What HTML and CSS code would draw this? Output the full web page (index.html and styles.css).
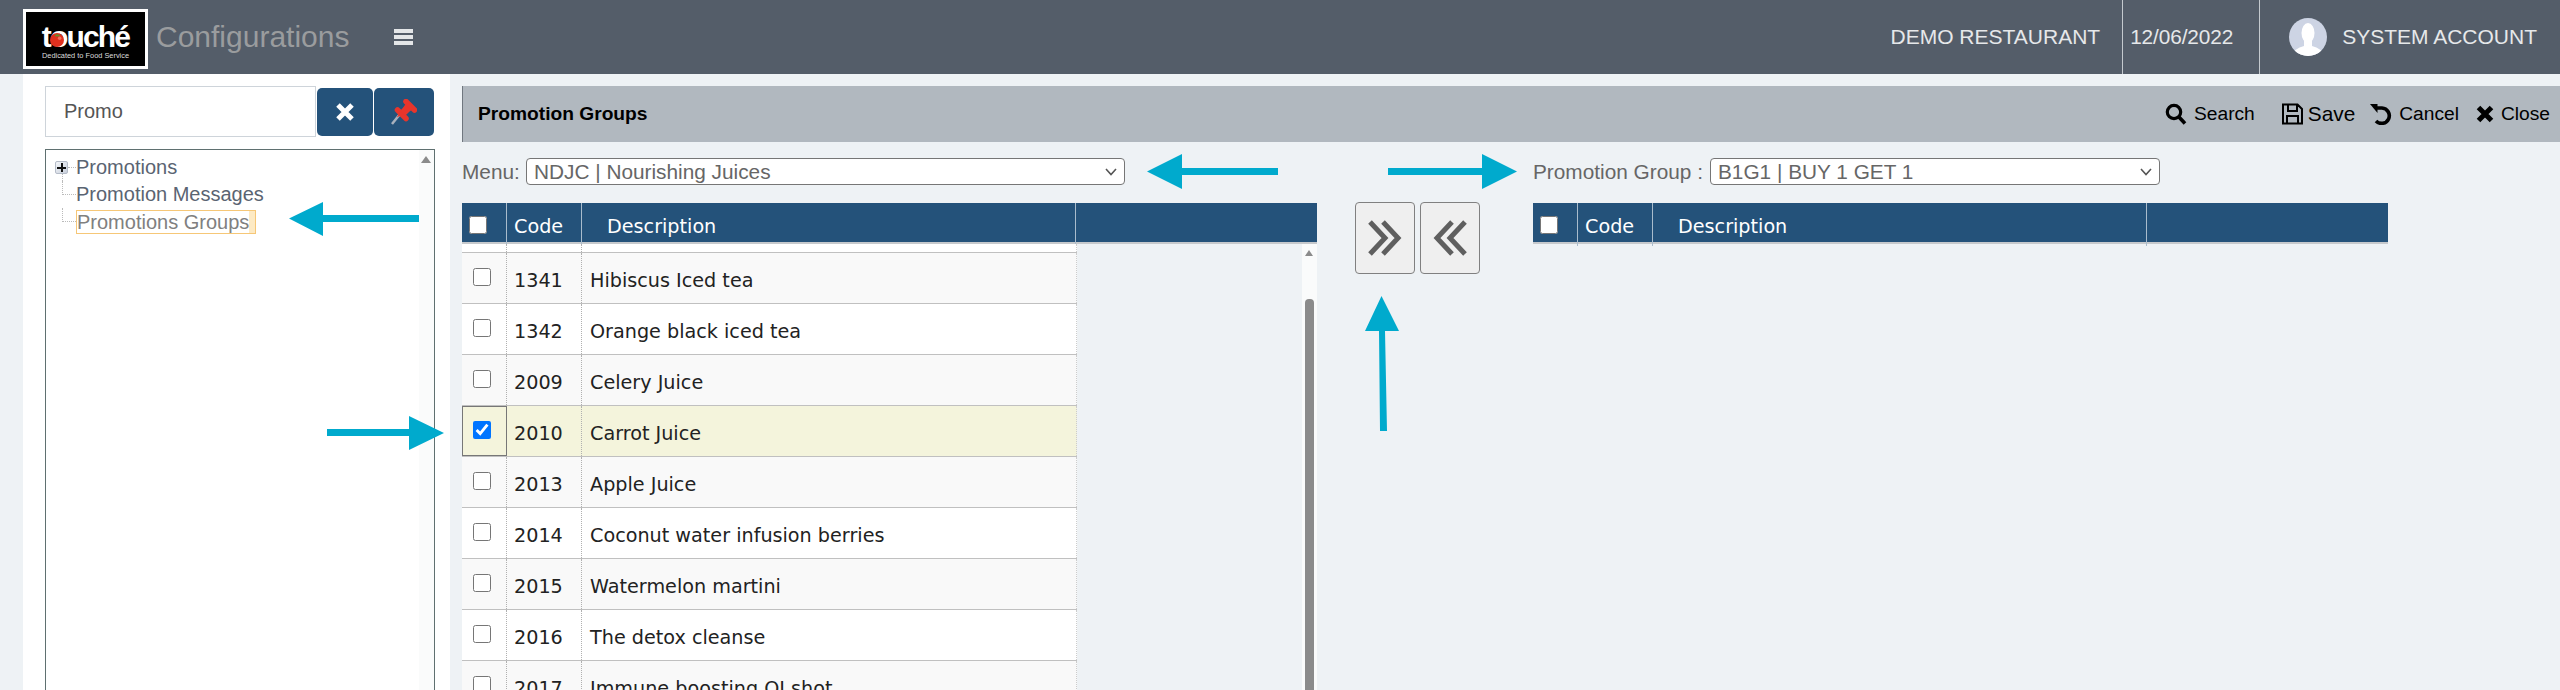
FILE: index.html
```html
<!DOCTYPE html>
<html lang="en">
<head>
<meta charset="utf-8">
<title>Configurations</title>
<link rel="stylesheet" href="styles.css">
</head>
<body>
<header class="topbar">
  <div class="logo">
    <span class="logo-word">touché</span>
    <span class="logo-tag">Dedicated to Food Service</span>
    <svg class="logo-tomato" viewBox="0 0 16 16" width="14" height="14"><circle cx="8" cy="8" r="8" fill="#e0301e"/><path d="M5 3 Q8 0 12 3 Q9 5 5 3Z" fill="#6c8a2a"/><circle cx="11" cy="6" r="2" fill="#f0705c"/></svg>
  </div>
  <span class="app-title">Configurations</span>
  <span class="hamburger"><i></i><i></i><i></i></span>
  <div class="top-right">
    <span class="top-item top-rest">DEMO RESTAURANT</span>
    <span class="top-item top-date">12/06/2022</span>
    <span class="top-item top-user">
      <svg class="avatar" viewBox="0 0 38 38" width="38" height="38"><defs><clipPath id="av"><circle cx="19" cy="19" r="19"/></clipPath></defs><circle cx="19" cy="19" r="19" fill="#cdd4e4"/><g clip-path="url(#av)" fill="#fff"><ellipse cx="19" cy="15" rx="6.5" ry="10"/><path d="M15 22 H23 V28 Q33 30 34 38 H4 Q5 30 15 28Z"/></g></svg>
      SYSTEM ACCOUNT
    </span>
  </div>
</header>

<main class="layout">
  <aside class="sidebar">
    <div class="search-row">
      <input class="search-input" type="text" value="Promo">
      <button class="side-btn side-btn-x" type="button"><svg viewBox="0 0 20 20" width="20" height="20"><path d="M3 3 L17 17 M17 3 L3 17" stroke="#fff" stroke-width="5"/></svg></button>
      <button class="side-btn side-btn-pin" type="button"><svg viewBox="0 0 26 26" width="26" height="26"><path d="M1 25 L9 15" stroke="#a9b1bd" stroke-width="2.5"/><path d="M15 2.5 L23.5 11" stroke="#e8352b" stroke-width="5.5" stroke-linecap="round"/><path d="M17 6 L13 12 L19 9Z" fill="#e8352b" stroke="#e8352b" stroke-width="5"/><path d="M6.5 11 L15 19.5" stroke="#e8352b" stroke-width="5.5" stroke-linecap="round"/><path d="M12 9 L17 14" stroke="#e8352b" stroke-width="8"/></svg></button>
    </div>
    <div class="tree">
      <div class="tree-scroll"><span class="tree-up"></span></div>
      <div class="tree-row tree-root"><span class="tree-plus"></span><span class="tree-dash"></span><span class="tree-text">Promotions</span></div>
      <div class="tree-row"><span class="tree-elbow"></span><span class="tree-text">Promotion Messages</span></div>
      <div class="tree-row"><span class="tree-elbow"></span><span class="tree-sel"><span class="tree-sel-text">Promotions Groups</span></span></div>
    </div>
  </aside>

  <section class="panel">
    <div class="titlebar">
      <span class="titlebar-name">Promotion Groups</span>
      <div class="tools">
        <span class="tool tool-search"><svg viewBox="0 0 22 22" width="22" height="22"><circle cx="9" cy="9" r="6.7" fill="none" stroke="#000" stroke-width="3.2"/><path d="M13.5 13.5 L20 20.5" stroke="#000" stroke-width="3.6"/></svg>Search</span>
        <span class="tool tool-save"><svg viewBox="0 0 21 22" width="21" height="22"><path d="M1 1.5 H15.5 L20 6 V20.5 H1Z M6 1.5 V8 H15 V1.5 M5 20.5 V13 H16 V20.5" fill="none" stroke="#000" stroke-width="2"/></svg>Save</span>
        <span class="tool tool-cancel"><svg viewBox="0 0 22 22" width="22" height="22"><path d="M6 5 H12 A7.7 7.7 0 1 1 6 18" fill="none" stroke="#000" stroke-width="3.6"/><path d="M0 1 H7.5 V10Z" fill="#000"/></svg>Cancel</span>
        <span class="tool tool-close"><svg viewBox="0 0 18 18" width="18" height="18"><path d="M2.5 2.5 L15.5 15.5 M15.5 2.5 L2.5 15.5" stroke="#000" stroke-width="5"/></svg>Close</span>
      </div>
    </div>

    <div class="columns">
      <div class="col">
        <div class="picker">
          <label class="picker-label picker-label-menu">Menu:</label>
          <select class="picker-select picker-select-menu"><option>NDJC | Nourishing Juices</option></select>
        </div>
        <div class="grid-head">
          <span class="cell-check"><input class="check" type="checkbox"></span>
          <span class="head-code">Code</span>
          <span class="head-desc">Description</span>
          <span></span>
        </div>
        <div class="grid-body">
          <div class="rows">
            <div class="row row-stub"><span></span><span></span><span></span></div>
            <div class="row row-odd"><span class="cell-check"><input class="check" type="checkbox"></span><span class="cell-code">1341</span><span class="cell-desc">Hibiscus Iced tea</span></div>
            <div class="row"><span class="cell-check"><input class="check" type="checkbox"></span><span class="cell-code">1342</span><span class="cell-desc">Orange black iced tea</span></div>
            <div class="row row-odd"><span class="cell-check"><input class="check" type="checkbox"></span><span class="cell-code">2009</span><span class="cell-desc">Celery Juice</span></div>
            <div class="row row-selected"><span class="cell-check"><input class="check" type="checkbox" checked></span><span class="cell-code">2010</span><span class="cell-desc">Carrot Juice</span></div>
            <div class="row row-odd"><span class="cell-check"><input class="check" type="checkbox"></span><span class="cell-code">2013</span><span class="cell-desc">Apple Juice</span></div>
            <div class="row"><span class="cell-check"><input class="check" type="checkbox"></span><span class="cell-code">2014</span><span class="cell-desc">Coconut water infusion berries</span></div>
            <div class="row row-odd"><span class="cell-check"><input class="check" type="checkbox"></span><span class="cell-code">2015</span><span class="cell-desc">Watermelon martini</span></div>
            <div class="row"><span class="cell-check"><input class="check" type="checkbox"></span><span class="cell-code">2016</span><span class="cell-desc">The detox cleanse</span></div>
            <div class="row row-odd"><span class="cell-check"><input class="check" type="checkbox"></span><span class="cell-code">2017</span><span class="cell-desc">Immune boosting OJ shot</span></div>
          </div>
          <div class="vscroll"><span class="vscroll-up"></span><span class="vscroll-thumb"></span></div>
        </div>
      </div>

      <div class="transfer">
        <button class="transfer-btn" type="button"><svg viewBox="0 0 36 36" width="36" height="36"><path d="M3 2 L18 18 L3 34 M16 2 L31 18 L16 34" fill="none" stroke="#5f5f5f" stroke-width="5"/></svg></button>
        <button class="transfer-btn" type="button"><svg viewBox="0 0 36 36" width="36" height="36"><path d="M33 2 L18 18 L33 34 M20 2 L5 18 L20 34" fill="none" stroke="#5f5f5f" stroke-width="5"/></svg></button>
      </div>

      <div class="col">
        <div class="picker">
          <label class="picker-label picker-label-group">Promotion Group :</label>
          <select class="picker-select picker-select-group"><option>B1G1 | BUY 1 GET 1</option></select>
        </div>
        <div class="grid-head">
          <span class="cell-check"><input class="check" type="checkbox"></span>
          <span class="head-code">Code</span>
          <span class="head-desc">Description</span>
          <span></span>
        </div>
      </div>
    </div>
  </section>
</main>

<svg class="callouts" viewBox="0 0 2560 690" width="2560" height="690">
  <g fill="#00aacd">
    <polygon points="289,218.5 323,202 323,215 419,215 419,222 323,222 323,236"/>
    <polygon points="1147,171.5 1182,154 1182,168 1278,168 1278,175 1182,175 1182,189"/>
    <polygon points="1517,171.5 1482,154 1482,168 1388,168 1388,175 1482,175 1482,189"/>
    <polygon points="444,433 409,416 409,429 327,429 327,436 409,436 409,450"/>
    <polygon points="1381.500,296 1399,331 1385,331 1387,431 1380,431 1379,331 1365,331"/>
  </g>
</svg>
</body>
</html>
```

FILE: styles.css
```css
* { box-sizing: border-box; }
html, body { height: 690px; overflow: hidden; }
body {
  margin: 0;
  position: relative;
  background: #eef2f5;
  font-family: "Liberation Sans", Arial, sans-serif;
  color: #222;
}

/* Top bar */
.topbar {
  display: flex;
  align-items: center;
  height: 74px;
  padding-left: 23px;
  background: #545d69;
}
.logo {
  position: relative;
  flex: none;
  width: 125px;
  height: 60px;
  margin-top: 4px;
  background: #000;
  border: 3px solid #fff;
  display: flex;
  flex-direction: column;
  align-items: center;
  color: #fff;
}
.logo-word {
  margin-top: 11px;
  font-size: 30px;
  line-height: 28px;
  font-weight: 700;
  letter-spacing: -1.800px;
}
.logo-tag { font-size: 7.400px; line-height: 9px; color: #ddd; white-space: nowrap; }
.logo-tomato { position: absolute; left: 24px; top: 21px; }
.app-title {
  margin-left: 8px;
  font-size: 30px;
  color: #9a9c9e;
}
.hamburger {
  display: flex;
  flex-direction: column;
  gap: 2px;
  width: 19px;
  margin-left: 45px;
}
.hamburger i { display: block; height: 4px; background: #e4e6e8; }
.top-right {
  display: flex;
  align-self: stretch;
  margin-left: auto;
  font-size: 21px;
  color: #e6e8ea;
}
.top-item { display: flex; align-items: center; }
.top-rest { padding-right: 22px; }
.top-date { width: 137px; padding-left: 7px; border-left: 1px solid #c4c9ce; font-size: 20.800px; letter-spacing: -.1px; }
.top-user { padding: 0 23px 0 29px; border-left: 1px solid #c4c9ce; }
.avatar { margin-right: 15px; }

/* Layout */
.layout { display: flex; height: 616px; padding-left: 23px; }
.sidebar {
  flex: none;
  width: 427px;
  padding: 12px 15px 0 22px;
  background: #fff;
}
.search-row { display: flex; align-items: center; height: 51px; }
.search-input {
  width: 271px;
  height: 51px;
  padding: 0 0 0 18px;
  border: 1px solid #ced4da;
  background: #fff;
  font: 20px "Liberation Sans", Arial, sans-serif;
  color: #555;
  outline: none;
}
.side-btn {
  display: flex;
  align-items: center;
  justify-content: center;
  height: 48px;
  padding: 0;
  border: 0;
  border-radius: 5px;
  background: #24527a;
}
.side-btn-x { width: 56px; margin-left: 1px; }
.side-btn-pin { width: 60px; margin-left: 1px; }
.tree {
  position: relative;
  height: 700px;
  margin-top: 12px;
  padding: 4px 0 0 9px;
  border: 1px solid #5f7070;
  font-size: 20px;
  color: #5a6472;
}
.tree-scroll {
  position: absolute;
  top: 0;
  right: 0;
  width: 15px;
  height: 100%;
  background: #fafbfb;
}
.tree-up {
  position: absolute;
  top: 6px;
  left: 2px;
  border: solid transparent;
  border-width: 0 5px 7px;
  border-bottom-color: #8b8b8b;
}
.tree-row { position: relative; display: flex; align-items: center; height: 27px; }
.tree-root::after {
  content: "";
  position: absolute;
  left: 7px;
  top: 20px;
  height: 7px;
  border-left: 1px dotted #bbb;
}
.tree-plus {
  position: relative;
  flex: none;
  width: 13px;
  height: 13px;
  border: 1px solid #b5bcc8;
  border-radius: 2px;
  background: linear-gradient(135deg, #f4f6f9, #c8cfdb);
}
.tree-plus::before, .tree-plus::after { content: ""; position: absolute; background: #111; }
.tree-plus::before { left: 1px; right: 1px; top: 4.500px; height: 2px; }
.tree-plus::after { top: 1px; bottom: 1px; left: 4.500px; width: 2px; }
.tree-dash { width: 8px; border-top: 1px dotted #bbb; }
.tree-text { white-space: nowrap; }
.tree-elbow {
  flex: none;
  align-self: flex-start;
  width: 14px;
  height: 14px;
  margin-left: 7px;
  border-left: 1px dotted #bbb;
  border-bottom: 1px dotted #bbb;
}
.tree-sel {
  display: flex;
  align-items: center;
  height: 24px;
  padding-right: 6px;
  border: 1px solid #f6c777;
  background: #fdeac4;
  color: #808080;
  white-space: nowrap;
}
.tree-sel-text { background: #fff; line-height: 22px; }

/* Panel */
.panel { flex: 1; min-width: 0; margin-left: 12px; padding-top: 12px; }
.titlebar {
  display: flex;
  align-items: center;
  height: 56px;
  padding: 0 10px 0 15px;
  background: #b1b8bf;
  border-left: 1px solid #70777f;
  color: #000;
  font-size: 19.200px;
}
.titlebar-name { font-weight: 700; }
.tools { display: flex; align-items: center; margin-left: auto; }
.tool { display: flex; align-items: center; gap: 7px; }
.tool-save { margin-left: 27px; gap: 5px; font-size: 20.800px; }
.tool-cancel { margin-left: 15px; }
.tool-close { margin-left: 17px; }

.columns { display: flex; align-items: flex-start; }
.col { flex: none; width: 855px; }
.picker {
  display: flex;
  align-items: center;
  height: 27px;
  margin-top: 16px;
  font-size: 20.800px;
  color: #666;
}
.picker-label { white-space: nowrap; }
.picker-label-menu { width: 64px; }
.picker-label-group { width: 177px; }
.picker-select {
  appearance: none;
  height: 27px;
  padding: 0 0 0 7px;
  border: 1px solid #767676;
  border-radius: 4px;
  background: #fff url("data:image/svg+xml,%3Csvg xmlns='http://www.w3.org/2000/svg' width='12' height='8'%3E%3Cpath d='M1 1 L6 6.500 L11 1' fill='none' stroke='%23555' stroke-width='1.600'/%3E%3C/svg%3E") no-repeat right 7px center;
  font: 20.800px "Liberation Sans", Arial, sans-serif;
  color: #666;
}
.picker-select-menu { width: 599px; }
.picker-select-group { width: 450px; }

.grid-head {
  display: grid;
  grid-template-columns: 45px 75px 494px 1fr;
  height: 41px;
  margin-top: 18px;
  border-bottom: 2px solid #c6c9cc;
  background: #24527a;
  color: #fff;
  font: 19.200px/39px "DejaVu Sans", Verdana, sans-serif;
}
.grid-head > span { border-right: 1px solid #a9bccc; }
.grid-head > span:last-child { border-right: 0; }
.grid-head .cell-check { padding: 13px 0 0 7px; }
.head-code { padding: 4px 0 0 7px; }
.head-desc { padding: 4px 0 0 25px; }

.grid-body { display: flex; justify-content: space-between; }
.rows { width: 615px; font: 19.200px "DejaVu Sans", Verdana, sans-serif; color: #222; }
.row {
  display: grid;
  grid-template-columns: 45px 75px 1fr;
  height: 51px;
  border-bottom: 1px solid #c0c0c0;
  background: #fff;
}
.row > span { display: block; border-right: 1px dotted #b0b0b0; }
.row > span:last-child { border-right: 1px dotted #ccc; }
.row-stub { height: 9px; }
.row-odd { background: #f9f9f9; }
.row-selected { background: #f4f4dc; }
.row-selected .cell-check { outline: 1px solid #777; outline-offset: -1px; border-right: 0; }
.cell-check { padding: 15px 0 0 11px; }
.cell-code { padding: 6px 0 0 7px; line-height: 44px; }
.cell-desc { padding: 6px 0 0 8px; line-height: 44px; white-space: nowrap; }
.check { display: block; width: 18px; height: 18px; margin: 0; }

.vscroll {
  position: relative;
  flex: none;
  width: 15px;
  height: 460px;
  background: #fafbfb;
}
.vscroll-up {
  position: absolute;
  top: 6px;
  left: 3px;
  border: solid transparent;
  border-width: 0 4.500px 6px;
  border-bottom-color: #8b8b8b;
}
.vscroll-thumb {
  position: absolute;
  top: 55px;
  bottom: 0;
  left: 3px;
  width: 9px;
  border-radius: 4px 4px 0 0;
  background: #8b8b8b;
}

.transfer { flex: none; display: flex; gap: 5px; margin: 60px 53px 0 38px; }
.transfer-btn {
  display: flex;
  align-items: center;
  justify-content: center;
  width: 60px;
  height: 72px;
  padding: 0;
  border: 1px solid #808080;
  border-radius: 4px;
  background: #efefef;
}

/* Annotation arrows over the page */
.callouts { position: absolute; top: 0; left: 0; pointer-events: none; }
```
